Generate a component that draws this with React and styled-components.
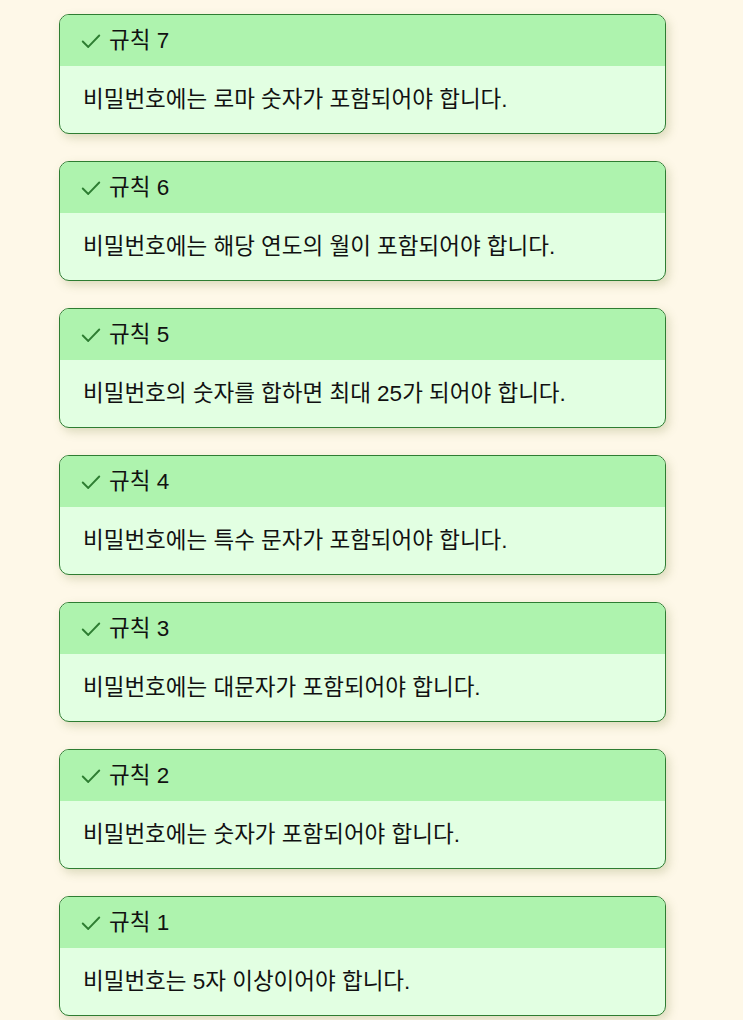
import React from "react";
import styled, { createGlobalStyle } from "styled-components";

const Global = createGlobalStyle`
  html, body { margin: 0; padding: 0; background: #fef8e8; }
  body {
    font-family: "Liberation Sans", Arial, "Noto Sans CJK KR", sans-serif;
    color: #111;
    line-height: 1.2;
  }
`;

const List = styled.div`
  display: flex;
  flex-direction: column;
  gap: 27px;
  width: 607px;
  padding: 14px 0 14px 59px;
`;

const Card = styled.section`
  border: 1px solid #2e7d32;
  border-radius: 10px;
  overflow: hidden;
  box-shadow: 3px 4px 10px rgba(120, 130, 60, 0.25);
  background: #e2ffe2;
`;

const Header = styled.div`
  display: flex;
  align-items: center;
  gap: 7px;
  height: 51px;
  padding: 0 20px;
  background: #aef3ae;
  font-size: 22.5px;
`;

const Body = styled.div`
  display: flex;
  align-items: center;
  height: 67px;
  padding: 0 23px;
  font-size: 22.5px;
`;

const Check = () => (
  <svg width="22" height="22" viewBox="0 0 24 24" fill="none" stroke="#2e7d32" strokeWidth="2.1" strokeLinecap="round" strokeLinejoin="round">
    <path d="M3 12.5l6 6L21 6" />
  </svg>
);

const rules = [
  [7, "비밀번호에는 로마 숫자가 포함되어야 합니다."],
  [6, "비밀번호에는 해당 연도의 월이 포함되어야 합니다."],
  [5, "비밀번호의 숫자를 합하면 최대 25가 되어야 합니다."],
  [4, "비밀번호에는 특수 문자가 포함되어야 합니다."],
  [3, "비밀번호에는 대문자가 포함되어야 합니다."],
  [2, "비밀번호에는 숫자가 포함되어야 합니다."],
  [1, "비밀번호는 5자 이상이어야 합니다."],
];

export default function App() {
  return (
    <>
      <Global />
      <List>
        {rules.map(([n, text]) => (
          <Card key={n}>
            <Header>
              <Check />
              <span>규칙 {n}</span>
            </Header>
            <Body>{text}</Body>
          </Card>
        ))}
      </List>
    </>
  );
}
